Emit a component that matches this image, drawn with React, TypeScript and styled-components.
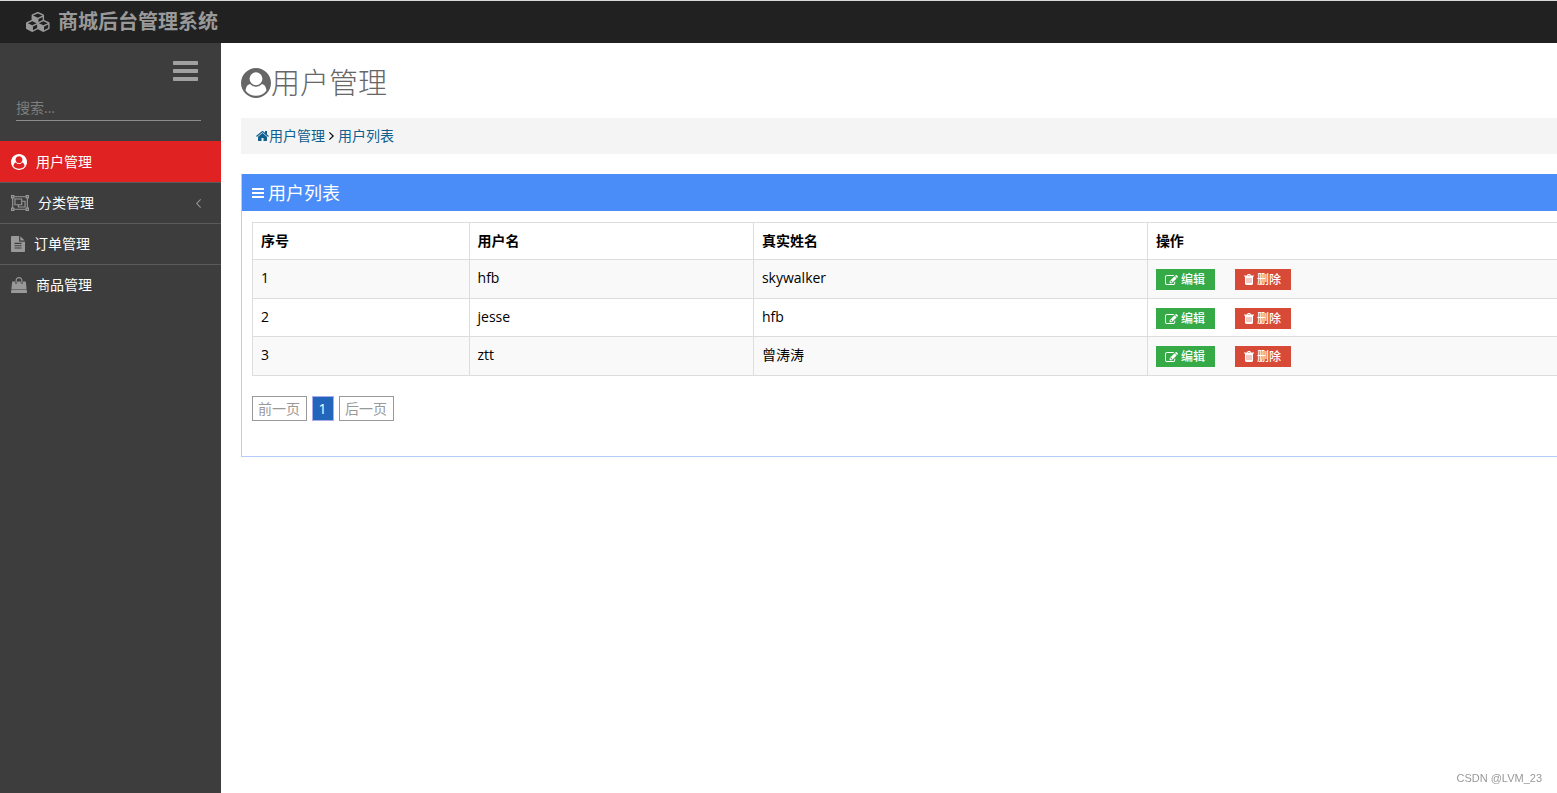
import React from "react";
import styled, { createGlobalStyle, css } from "styled-components";

const GlobalStyle = createGlobalStyle`
  *, *::before, *::after { box-sizing: border-box; }
  body {
    margin: 0;
    background: #fff;
    color: #000;
    font: 14px/20px "Open Sans", "Noto Sans CJK SC", sans-serif;
  }
  button, input { font: inherit; }
  a { text-decoration: none; }
`;

/* ---------- icons ---------- */

const Svg = styled.svg<{ $w: number; $h: number }>`
  display: block;
  flex: none;
  width: ${(p) => p.$w}px;
  height: ${(p) => p.$h}px;
  fill: currentColor;
`;

const icons = {
  cubes: {
    box: "0 0 2304 1792",
    d: "M640 1632l384-192v-314l-384 164v342zm-64-454l404-173-404-173-404 173zm1088 454l384-192v-314l-384 164v342zm-64-454l404-173-404-173-404 173zm-448-293l384-165v-266l-384 164v267zm-64-379l441-189-441-189-441 189zm1088 518v416q0 36-19 67t-52 47l-448 224q-25 14-57 14t-57-14l-448-224q-4-2-7-4-2 2-7 4l-448 224q-25 14-57 14t-57-14l-448-224q-33-16-52-47t-19-67v-416q0-38 21.5-70t56.5-48l434-186v-400q0-38 21.5-70t56.5-48l448-192q23-10 50-10t50 10l448 192q35 16 56.5 48t21.5 70v400l434 186q36 16 57 48t21 70z",
  },
  user: {
    box: "0 0 1792 1792",
    d: "M1523 1339q-22-155-87.5-257.5t-184.5-118.5q-67 74-159.5 115.5t-195.5 41.5-195.5-41.5-159.5-115.5q-119 16-184.5 118.5t-87.5 257.5q106 150 271 237.5t356 87.5 356-87.5 271-237.5zm-243-699q0-159-112.5-271.5t-271.5-112.5-271.5 112.5-112.5 271.5 112.5 271.5 271.5 112.5 271.5-112.5 112.5-271.5zm512 256q0 182-71 347.5t-190.5 286-285.5 191.5-349 71q-182 0-348-71t-286-191-191-286-71-348 71-348 191-286 286-191 348-71 348 71 286 191 191 286 71 348z",
  },
  group: {
    box: "0 0 2048 1792",
    d: "M2048 384h-128v1024h128v384h-384v-128h-1280v128h-384v-384h128v-1024h-128v-384h384v128h1280v-128h384zM1792 128v128h128v-128zM128 128v128h128v-128zM256 1664v-128h-128v128zM1920 1664v-128h-128v128zM1792 1408v-1024h-128v-128h-1280v128h-128v1024h128v128h1280v-128zM1280 640h384v768h-896v-256h-384v-768h896zM512 512v512h640v-512zM1536 1280v-512h-256v384h-384v128z",
  },
  file: {
    box: "128 0 1536 1792",
    d: "M1596 476q14 14 28 36h-472v-472q22 14 36 28zm-476 164h544v1056q0 40-28 68t-68 28h-1344q-40 0-68-28t-28-68v-1600q0-40 28-68t68-28h800v544q0 40 28 68t68 28zm160 736v-64q0-14-9-23t-23-9h-704q-14 0-23 9t-9 23v64q0 14 9 23t23 9h704q14 0 23-9t9-23zm0-256v-64q0-14-9-23t-23-9h-704q-14 0-23 9t-9 23v64q0 14 9 23t23 9h704q14 0 23-9t9-23zm0-256v-64q0-14-9-23t-23-9h-704q-14 0-23 9t-9 23v64q0 14 9 23t23 9h704q14 0 23-9t9-23z",
  },
  bag: {
    box: "0 0 1792 1792",
    d: "M1757 1408l35 313q3 28-16 50-19 21-48 21h-1664q-29 0-48-21-19-22-16-50l35-313h1722zm-93-839l86 775h-1708l86-775q3-24 21-40.5t43-16.5h256v128q0 53 37.5 90.5t90.5 37.5 90.5-37.5 37.5-90.5v-128h384v128q0 53 37.5 90.5t90.5 37.5 90.5-37.5 37.5-90.5v-128h256q25 0 43 16.5t21 40.5zm-384-185v256q0 26-19 45t-45 19-45-19-19-45v-256q0-106-75-181t-181-75-181 75-75 181v256q0 26-19 45t-45 19-45-19-19-45v-256q0-159 112.5-271.5t271.5-112.5 271.5 112.5 112.5 271.5z",
  },
  home: {
    box: "64 256 1664 1280",
    d: "M1472 992v480q0 26-19 45t-45 19h-384v-384h-256v384h-384q-26 0-45-19t-19-45v-480q0-1 .5-3t.5-3l575-474 575 474q1 2 1 6zm223-69l-62 74q-8 9-21 11h-3q-13 0-21-7l-692-577-692 577q-12 8-24 7-13-2-21-11l-62-74q-8-10-7-23.5t11-21.5l719-599q32-26 76-26t76 26l244 204v-195q0-14 9-23t23-9h192q14 0 23 9t9 23v408l219 182q10 8 11 21.5t-7 23.5z",
  },
  edit: {
    box: "0 128 1792 1408",
    d: "M888 1184l116-116-152-152-116 116v56h96v96h56zm520-126v190q0 119-84.5 203.5t-203.5 84.5h-832q-119 0-203.5-84.5t-84.5-203.5v-832q0-119 84.5-203.5t203.5-84.5h832q63 0 117 25 15 7 18 23 3 17-9 29l-49 49q-14 14-32 8-23-6-45-6h-832q-66 0-113 47t-47 113v832q0 66 47 113t113 47h832q66 0 113-47t47-113v-126q0-13 9-22l64-64q15-15 35-7t20 29zm-96-738l288 288-672 672h-288v-288zm444 132l-92 92-288-288 92-92q28-28 68-28t68 28l152 152q28 28 28 68t-28 68z",
  },
  trash: {
    box: "0 0 20 22",
    d: "M6 3l1-2 1-1h4l1 1 1 2h6v2h-2v15l-2 2h-12l-2-2v-15h-2v-2zM8 2l-.5 1h5l-.5-1zM5.4 8v10h1.2v-10zM9.4 8v10h1.2v-10zM13.4 8v10h1.2v-10z",
  },
  bars: {
    box: "0 0 25 20",
    d: "M.5 0h24l.5.5v3l-.5.5h-24l-.5-.5v-3zM.5 8h24l.5.5v3l-.5.5h-24l-.5-.5v-3zM.5 16h24l.5.5v3l-.5.5h-24l-.5-.5v-3z",
  },
  angle: {
    box: "0 0 6 10",
    d: "M5.2 0l.8.8-4.3 4.2 4.3 4.2-.8.8-5.2-5z",
  },
  next: {
    box: "0 0 5 8",
    d: "M.8 0l4.2 4-4.2 4-.8-.8 3.3-3.2-3.3-3.2z",
  },
};

type IconName = keyof typeof icons;

const Icon = ({ name, w, h }: { name: IconName; w: number; h: number }) => (
  <Svg $w={w} $h={h} viewBox={icons[name].box} preserveAspectRatio="none" aria-hidden="true">
    <path fillRule="evenodd" d={icons[name].d} />
  </Svg>
);

/* ---------- frame ---------- */

const Page = styled.div`
  display: flex;
  flex-direction: column;
  min-height: 100vh;
`;

const TopBar = styled.header`
  display: flex;
  align-items: center;
  height: 43px;
  padding: 0 26px;
  border-top: 1px solid #d9d9d9;
  background: #212121;
`;

const Brand = styled.a`
  display: flex;
  align-items: center;
  gap: 7px;
  color: #999;
  font-size: 20px;
  line-height: 28px;
  font-weight: 700;
`;

const Body = styled.div`
  display: flex;
  flex: 1;
`;

const Sidebar = styled.aside`
  flex: none;
  width: 221px;
  background: #3d3d3d;
`;

const SideTop = styled.div`
  display: flex;
  flex-direction: column;
  height: 98px;
  padding: 18px 20px 0 16px;
`;

const MenuToggle = styled.button`
  align-self: flex-end;
  margin-right: 3px;
  padding: 0;
  border: 0;
  background: none;
  color: #a0a0a0;
`;

const Search = styled.input`
  width: 100%;
  height: 26px;
  margin-top: 14px;
  padding: 0;
  border: 0;
  border-bottom: 1px solid #8c8c8c;
  background: none;
  color: #ccc;
  outline: none;
  &::placeholder { color: #7e7e7e; }
`;

const Menu = styled.nav`
  display: flex;
  flex-direction: column;
`;

const MenuItem = styled.a<{ $active?: boolean }>`
  display: flex;
  align-items: center;
  gap: 9px;
  height: 41px;
  padding: 0 20px 0 11px;
  color: #999;
  & + & { border-top: 1px solid #5a5a5a; }
  ${(p) =>
    p.$active &&
    css`
      background: #e12222;
      color: #fff;
    `}
`;

const MenuLabel = styled.span`
  flex: 1;
  color: #fff;
`;

/* ---------- content ---------- */

const Main = styled.main`
  flex: 1;
  min-width: 0;
  padding: 20px 0 20px 20px;
`;

const Title = styled.h1`
  display: flex;
  align-items: center;
  height: 40px;
  margin: 0 0 15px;
  color: #666;
  font-size: 29px;
  line-height: 40px;
  font-weight: 300;
`;

const Crumbs = styled.nav`
  display: flex;
  align-items: center;
  gap: 4px;
  height: 36px;
  margin-bottom: 20px;
  padding: 0 15px;
  background: #f4f4f4;
`;

const Crumb = styled.a`
  display: flex;
  align-items: center;
  color: #0f5f8f;
`;

const Panel = styled.section`
  border-left: 1px solid #b4cef8;
  border-bottom: 1px solid #b4cef8;
`;

const PanelHead = styled.h2`
  display: flex;
  align-items: center;
  gap: 4px;
  height: 37px;
  margin: 0;
  padding: 0 10px;
  background: #4b8df8;
  color: #fff;
  font-size: 18px;
  line-height: 24px;
  font-weight: 400;
`;

const PanelBody = styled.div`
  padding: 11px 0 35px 10px;
`;

const Table = styled.table`
  width: 100%;
  table-layout: fixed;
  border-collapse: collapse;
  th, td {
    padding: 8px 8px 0;
    border: 1px solid #ddd;
    text-align: left;
    vertical-align: top;
  }
  th { height: 37px; font-weight: 700; }
  td { height: 39px; }
  th:last-child, td:last-child { border-right: 0; }
  tbody tr:nth-child(odd) { background: #f9f9f9; }
  tbody tr:nth-child(even) td { height: 38px; }
`;

const Col = styled.col<{ $share?: string }>`
  width: ${(p) => p.$share ?? "auto"};
`;

const Actions = styled.div`
  display: flex;
  gap: 20px;
  padding-top: 1px;
`;

const ActionButton = styled.button<{ $tone: string }>`
  display: flex;
  align-items: center;
  gap: 3px;
  height: 21px;
  padding: 0 10px 0 9px;
  border: 0;
  background: ${(p) => p.$tone};
  color: #fff;
  font-size: 12px;
  line-height: 21px;
  font-weight: 500;
`;

const Pager = styled.div`
  display: flex;
  gap: 5px;
  margin-top: 20px;
`;

const PageButton = styled.button<{ $current?: boolean }>`
  min-width: 22px;
  height: 25px;
  padding: 0 6px 0 5px;
  border: 1px solid ${(p) => (p.$current ? "#aaaaee" : "#999")};
  background: ${(p) => (p.$current ? "#2266bb" : "#fff")};
  color: ${(p) => (p.$current ? "#fff" : "#999")};
`;

const Watermark = styled.span`
  position: fixed;
  right: 15px;
  bottom: 7px;
  color: #999;
  font: 11px/16px "Liberation Sans", sans-serif;
`;

type MenuEntry = {
  label: string;
  icon: IconName;
  w: number;
  h: number;
  active?: boolean;
  nested?: boolean;
};

const menu: MenuEntry[] = [
  { label: "用户管理", icon: "user", w: 16, h: 16, active: true },
  { label: "分类管理", icon: "group", w: 18, h: 16, nested: true },
  { label: "订单管理", icon: "file", w: 14, h: 16 },
  { label: "商品管理", icon: "bag", w: 16, h: 16 },
];

const users = [
  { id: 1, name: "hfb", real: "skywalker" },
  { id: 2, name: "jesse", real: "hfb" },
  { id: 3, name: "ztt", real: "曾涛涛" },
];

export default function App() {
  return (
    <Page lang="zh-CN">
      <GlobalStyle />
      <TopBar>
        <Brand href="#">
          <Icon name="cubes" w={25} h={20} />
          商城后台管理系统
        </Brand>
      </TopBar>
      <Body>
        <Sidebar>
          <SideTop>
            <MenuToggle type="button" aria-label="菜单">
              <Icon name="bars" w={25} h={20} />
            </MenuToggle>
            <Search type="text" placeholder="搜索..." aria-label="搜索" />
          </SideTop>
          <Menu>
            {menu.map((m) => (
              <MenuItem key={m.label} href="#" $active={m.active}>
                <Icon name={m.icon} w={m.w} h={m.h} />
                <MenuLabel>{m.label}</MenuLabel>
                {m.nested && <Icon name="angle" w={5} h={9} />}
              </MenuItem>
            ))}
          </Menu>
        </Sidebar>
        <Main>
          <Title>
            <Icon name="user" w={30} h={30} />
            用户管理
          </Title>
          <Crumbs>
            <Crumb href="#">
              <Icon name="home" w={13} h={10} />
              用户管理
            </Crumb>
            <Icon name="next" w={5} h={8} />
            <Crumb href="#">用户列表</Crumb>
          </Crumbs>
          <Panel>
            <PanelHead>
              <Icon name="bars" w={12} h={10} />
              用户列表
            </PanelHead>
            <PanelBody>
              <Table>
                <colgroup>
                  <Col $share="16.6%" />
                  <Col $share="21.8%" />
                  <Col $share="30.2%" />
                  <Col />
                </colgroup>
                <thead>
                  <tr>
                    <th>序号</th>
                    <th>用户名</th>
                    <th>真实姓名</th>
                    <th>操作</th>
                  </tr>
                </thead>
                <tbody>
                  {users.map((u) => (
                    <tr key={u.id}>
                      <td>{u.id}</td>
                      <td>{u.name}</td>
                      <td>{u.real}</td>
                      <td>
                        <Actions>
                          <ActionButton type="button" $tone="#35aa47">
                            <Icon name="edit" w={13} h={10} />
                            编辑
                          </ActionButton>
                          <ActionButton type="button" $tone="#d84a38">
                            <Icon name="trash" w={10} h={11} />
                            删除
                          </ActionButton>
                        </Actions>
                      </td>
                    </tr>
                  ))}
                </tbody>
              </Table>
              <Pager>
                <PageButton type="button">前一页</PageButton>
                <PageButton type="button" $current>1</PageButton>
                <PageButton type="button">后一页</PageButton>
              </Pager>
            </PanelBody>
          </Panel>
        </Main>
      </Body>
      <Watermark>CSDN @LVM_23</Watermark>
    </Page>
  );
}
